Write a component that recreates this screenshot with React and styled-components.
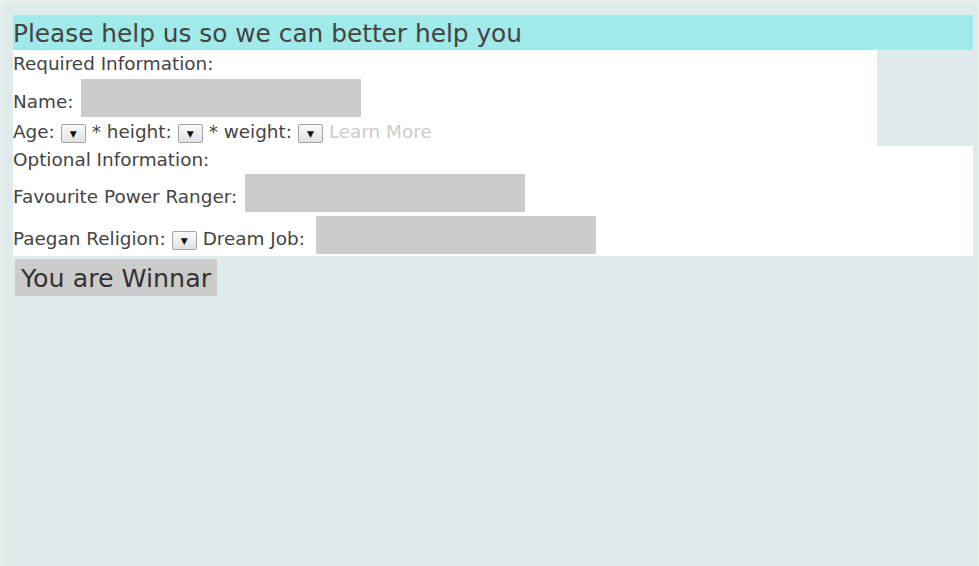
import styled, { createGlobalStyle } from "styled-components";

const GlobalStyle = createGlobalStyle`
  html, body {
    margin: 0;
    background: #e7eeee;
  }
  body {
    padding: 5px 2px 0 3px;
    font-family: "DejaVu Sans", sans-serif;
    color: #444;
  }
`;

const Page = styled.div`
  background: #dfeaea;
  min-height: 561px;
  padding: 10px 4px 10px 10px;
  box-sizing: border-box;
`;

const Heading = styled.h1`
  margin: 0;
  background: #a0eaea;
  font-size: 24.8px;
  font-weight: normal;
  line-height: 38px;
  height: 35px;
  overflow: hidden;
  color: #444;
`;

const Section = styled.div`
  background: #fff;
  width: ${(p) => p.$width || "auto"};
  font-size: 18.4px;
  padding-bottom: 2px;
`;

const SectionTitle = styled.div`
  line-height: 27px;
  height: 26px;
`;

const Row = styled.div`
  display: flex;
  align-items: flex-end;
  gap: 6px;
  min-height: ${(p) => p.$h || "22px"};
  padding-top: ${(p) => p.$pt || "0"};

  & > span {
    margin-bottom: ${(p) => p.$lift || "0"};
  }
`;

const Label = styled.span`
  line-height: 22px;
  white-space: nowrap;
  color: ${(p) => (p.$muted ? "#cccccc" : "#444")};
`;

const TextBox = styled.div`
  width: 280px;
  height: 38px;
  background: #cccccc;
  margin-left: ${(p) => p.$ml || "2px"};
`;

const Select = styled.span`
  display: inline-flex;
  align-items: center;
  justify-content: center;
  width: 23px;
  height: 17px;
  border: 1px solid #a4a4a4;
  border-radius: 2px;
  background: linear-gradient(#fafafa, #e2e2e2);
  font-size: 9px;
  color: #111;
`;

const Button = styled.button`
  display: block;
  margin: 3px 0 0 2px;
  border: none;
  background: #cccccc;
  font-family: "DejaVu Sans", sans-serif;
  font-size: 25.3px;
  color: #333;
  padding: 0 6px;
  height: 37px;
  line-height: 39px;
`;

const Arrow = () => <Select>▼</Select>;

export default function App() {
  return (
    <>
      <GlobalStyle />
      <Page>
        <Heading>Please help us so we can better help you</Heading>
        <Section $width="864px">
          <SectionTitle>Required Information:</SectionTitle>
          <Row $pt="3px" $lift="4px">
            <Label>Name:</Label>
            <TextBox />
          </Row>
          <Row $h="27px" $lift="1px">
            <Label>Age:</Label>
            <Arrow />
            <Label>* height:</Label>
            <Arrow />
            <Label>* weight:</Label>
            <Arrow />
            <Label $muted>Learn More</Label>
          </Row>
        </Section>
        <Section>
          <SectionTitle>Optional Information:</SectionTitle>
          <Row $pt="2px" $lift="4px">
            <Label>Favourite Power Ranger:</Label>
            <TextBox />
          </Row>
          <Row $pt="4px" $lift="4px">
            <Label>Paegan Religion:</Label>
            <Arrow />
            <Label>Dream Job:</Label>
            <TextBox $ml="5px" />
          </Row>
        </Section>
        <Button>You are Winnar</Button>
      </Page>
    </>
  );
}
